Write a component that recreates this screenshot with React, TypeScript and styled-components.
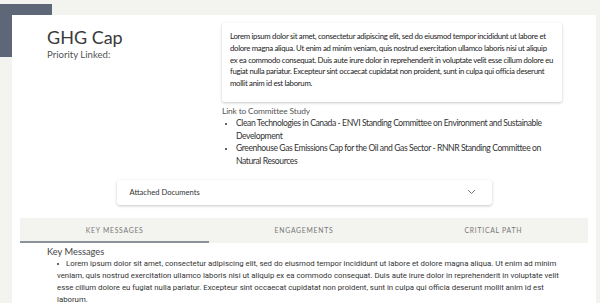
import React from 'react';
import styled, { createGlobalStyle } from 'styled-components';

const GlobalStyle = createGlobalStyle`
	html, body {
		margin: 0;
		padding: 0;
		background: #f3f3ef;
		font-family: 'Lato', 'Noto Sans', sans-serif;
		overflow: hidden;
	}
`;

const lorem =
	'Lorem ipsum dolor sit amet, consectetur adipiscing elit, sed do eiusmod tempor incididunt ut labore et dolore magna aliqua. Ut enim ad minim veniam, quis nostrud exercitation ullamco laboris nisi ut aliquip ex ea commodo consequat. Duis aute irure dolor in reprehenderit in voluptate velit esse cillum dolore eu fugiat nulla pariatur. Excepteur sint occaecat cupidatat non proident, sunt in culpa qui officia deserunt mollit anim id est laborum.';

const studies = [
	'Clean Technologies in Canada - ENVI Standing Committee on Environment and Sustainable Development',
	'Greenhouse Gas Emissions Cap for the Oil and Gas Sector - RNNR Standing Committee on Natural\u00a0Resources',
];

const tabs = ['Key Messages', 'Engagements', 'Critical Path'];

const App = () => {
	return (
		<>
			<GlobalStyle />
			<Page>
				<Accent />
				<Card>
					<TopRow>
						<div>
							<Title>GHG Cap</Title>
							<Subtitle>Priority Linked:</Subtitle>
						</div>
						<div>
							<Summary>{lorem}</Summary>
							<LinkLabel>Link to Committee Study</LinkLabel>
							<StudyList>
								{studies.map((s, i) => (
									<li key={i}>{s}</li>
								))}
							</StudyList>
						</div>
					</TopRow>
					<Accordion>
						<span>Attached Documents</span>
						<svg width="9" height="6" viewBox="0 0 9 6">
							<path d="M1 1l3.5 3.5L8 1" fill="none" stroke="#777" strokeWidth="1" />
						</svg>
					</Accordion>
					<TabBar>
						{tabs.map((t, i) => (
							<Tab key={t} active={i === 0}>
								{t}
							</Tab>
						))}
					</TabBar>
					<Messages>
						<MessagesTitle>Key Messages</MessagesTitle>
						<MessageList>
							<li>{lorem}</li>
						</MessageList>
					</Messages>
				</Card>
			</Page>
		</>
	);
};

export default App;

const Page = styled.div`
	position: relative;
	padding: 15px 4px 0 12px;
	height: 288px;
`;

const Accent = styled.div`
	position: absolute;
	left: 0;
	top: 4px;
	width: 52px;
	height: 53px;
	background: #5e6778;
`;

const Card = styled.div`
	position: relative;
	background: #fff;
	height: 100%;
	padding: 8px 8px 0 8px;
	box-sizing: border-box;
`;

const TopRow = styled.div`
	display: grid;
	grid-template-columns: 175px 340px;
	padding-left: 27px;
`;

const Title = styled.h1`
	margin: 3px 0 0 0;
	font-size: 18px;
	line-height: 22px;
	font-weight: 400;
	color: #3a3a3a;
`;

const Subtitle = styled.div`
	margin-top: 1px;
	font-size: 9.6px;
	line-height: 12px;
	color: #555;
`;

const Summary = styled.div`
	background: #fff;
	box-shadow: 0 1px 3px rgba(0, 0, 0, 0.22);
	border-radius: 2px;
	padding: 8px 7px 10px 8px;
	height: 79px;
	box-sizing: border-box;
	font-size: 7.8px;
	letter-spacing: -0.3px;
	line-height: 11.8px;
	color: #222;
`;

const LinkLabel = styled.div`
	margin-top: 3px;
	font-size: 8.4px;
	letter-spacing: -0.15px;
	line-height: 12px;
	color: #555;
`;

const StudyList = styled.ul`
	margin: 0 -12px 0 0;
	padding: 0 0 0 14px;
	font-size: 8.6px;
	letter-spacing: -0.42px;
	line-height: 12.7px;
	color: #333;
	li::marker {
		font-size: 7px;
	}
`;

const Accordion = styled.div`
	margin: 12px auto 0;
	width: 375px;
	height: 25px;
	box-sizing: border-box;
	display: flex;
	align-items: center;
	justify-content: space-between;
	padding: 0 16px 0 13px;
	background: #fff;
	border-radius: 3px;
	box-shadow: 0 1px 3px rgba(0, 0, 0, 0.22);
	font-size: 7.6px;
	color: #333;
`;

const TabBar = styled.div`
	margin-top: 13px;
	display: grid;
	grid-template-columns: repeat(3, 1fr);
	background: #f3f3ef;
	height: 25px;
`;

const Tab = styled.div<{ active?: boolean }>`
	display: flex;
	align-items: center;
	justify-content: center;
	text-transform: uppercase;
	letter-spacing: 0.75px;
	font-size: 6.8px;
	color: #777;
	box-sizing: border-box;
	border-bottom: 2px solid ${(p) => (p.active ? '#8b909a' : 'transparent')};
	padding-top: 2px;
`;

const Messages = styled.div`
	padding-left: 27px;
	padding-right: 22px;
`;

const MessagesTitle = styled.div`
	margin-top: 2px;
	font-size: 9.3px;
	line-height: 13px;
	color: #444;
`;

const MessageList = styled.ul`
	margin: 0;
	padding: 0 0 0 10px;
	list-style-position: inside;
	font-family: 'Roboto', 'Liberation Sans', sans-serif;
	font-size: 7.8px;
	line-height: 12.2px;
	color: #333;
	li::marker {
		font-size: 6px;
	}
`;
